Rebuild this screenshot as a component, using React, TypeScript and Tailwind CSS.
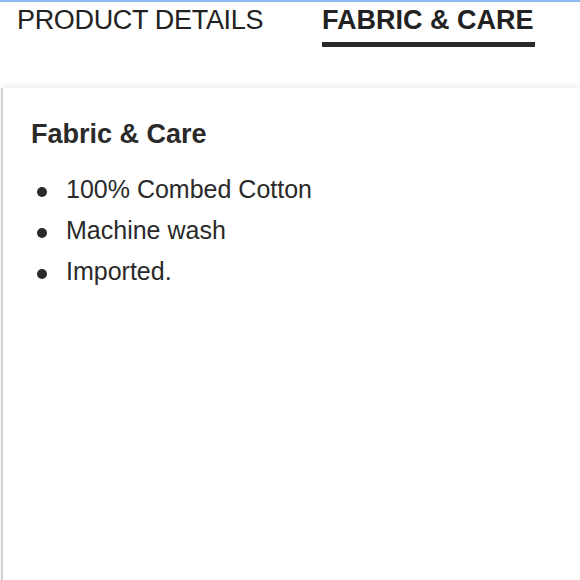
const items = ["100% Combed Cotton", "Machine wash", "Imported."];

export default function App() {
  return (
    <div
      className="h-[580px] w-[580px] overflow-hidden bg-white text-[#2a2a2a]"
      style={{ fontFamily: '"Liberation Sans", Arial, sans-serif' }}
    >
      <div className="h-[2px] bg-[#8ebcf0]" />

      <nav className="mt-[5px] flex items-start gap-[59px] pl-[17px]">
        <div className="text-[27px] leading-[27px] tracking-[-0.33px] text-[#222]">PRODUCT DETAILS</div>
        <div className="flex flex-col">
          <div className="text-[27px] font-bold leading-[27px] text-[#222]">FABRIC &amp; CARE</div>
          <div className="mt-[8px] h-[5px] w-[213px] bg-[#2a2a2a]" />
        </div>
      </nav>

      <section className="ml-[1px] mt-[41px] h-[600px] border-l-2 border-[#d0d0d0] bg-white pl-[28px] pt-[33px] shadow-[0_-2px_6px_rgba(0,0,0,0.08)]">
        <h2 className="text-[27px] font-bold leading-[27px] text-[#2a2a2a]">Fabric &amp; Care</h2>
        <ul className="mt-[21px]">
          {items.map((item) => (
            <li key={item} className="flex h-[41px] items-start">
              <span className="ml-[6px] mt-[18px] h-[10px] w-[10px] shrink-0 rounded-full bg-[#2a2a2a]" />
              <span className="ml-[19px] text-[25px] leading-[41px]">{item}</span>
            </li>
          ))}
        </ul>
      </section>
    </div>
  );
}
